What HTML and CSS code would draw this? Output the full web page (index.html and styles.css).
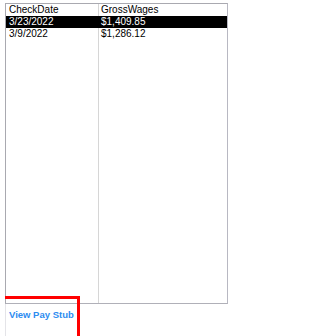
FILE: index.html
```html
<!DOCTYPE html>
<html>
<head>
<meta charset="utf-8">
<link rel="stylesheet" href="styles.css">
</head>
<body>
<div class="page">
  <div class="grid">
    <div class="row head">
      <div class="c1">CheckDate</div>
      <div class="c2">GrossWages</div>
    </div>
    <div class="row sel">
      <div class="c1">3/23/2022</div>
      <div class="c2">$1,409.85</div>
    </div>
    <div class="row">
      <div class="c1">3/9/2022</div>
      <div class="c2">$1,286.12</div>
    </div>
    <div class="fill">
      <div class="c1"></div>
      <div class="c2"></div>
    </div>
  </div>
  <div class="footer">
    <a class="link" href="#">View Pay Stub</a>
  </div>
  <div class="highlight"></div>
</div>
</body>
</html>
```

FILE: styles.css
```css
html, body {
  margin: 0;
  padding: 0;
  background: #ffffff;
}
body {
  width: 237px;
  height: 336px;
  overflow: hidden;
  font-family: "Liberation Sans", Arial, sans-serif;
}
.page {
  position: relative;
  height: 336px;
  overflow: hidden;
}
.grid {
  margin: 3px 0 0 5px;
  width: 221px;
  height: 299px;
  border: 1px solid #a9a9b0;
  border-right-color: #b8b8c2;
  border-bottom-color: #b0b0b8;
  display: flex;
  flex-direction: column;
  font-size: 10px;
  color: #000;
}
.row {
  display: flex;
  height: 12px;
  line-height: 12px;
}
.c1 {
  width: 89px;
  padding-left: 3px;
  border-right: 1px solid #d6d6d6;
  white-space: nowrap;
}
.c2 {
  flex: 1;
  padding-left: 2px;
  white-space: nowrap;
}
.sel {
  background: #000;
  color: #fff;
}
.sel .c1 {
  border-right-color: #000;
}
.fill {
  display: flex;
  flex: 1;
}
.footer {
  margin-left: 5px;
  height: 32px;
  border-left: 1px solid #e4e4e8;
  padding-top: 5px;
  box-sizing: border-box;
}
.link {
  display: block;
  padding-left: 3px;
  font-size: 9.5px;
  font-weight: bold;
  line-height: 12px;
  color: #2d8cf0;
  text-decoration: none;
}
.highlight {
  position: absolute;
  left: 5px;
  top: 296px;
  width: 72px;
  height: 37px;
  border-top: 3px solid #ff0000;
  border-right: 3px solid #ff0000;
}
```
